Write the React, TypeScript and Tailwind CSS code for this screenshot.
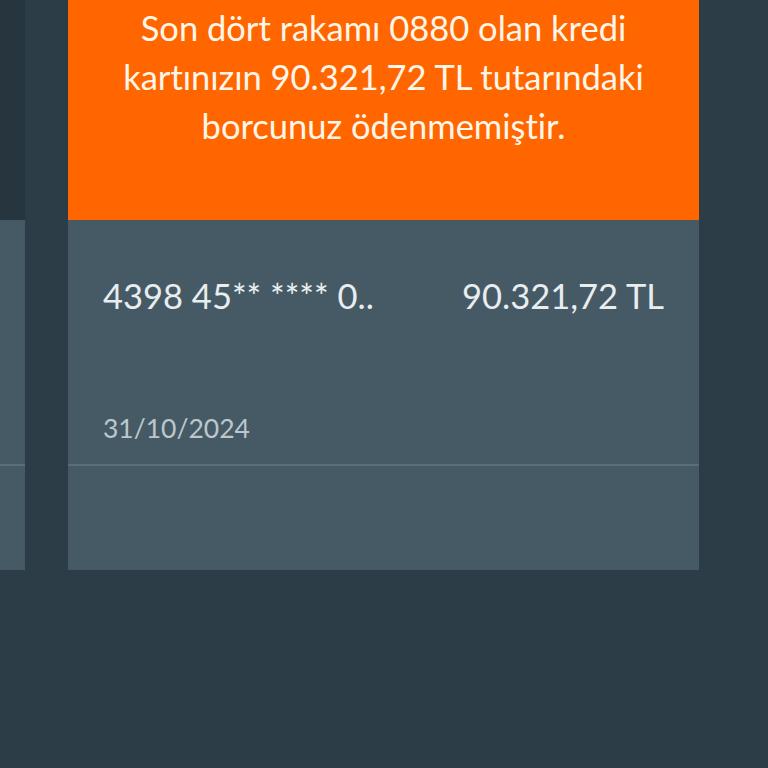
export default function App() {
  return (
    <div
      className="flex h-[768px] w-[768px] items-start gap-[43px] overflow-hidden bg-[#2d3d47] [font-variant-ligatures:none]"
      style={{ fontFamily: "Lato, 'Noto Sans', sans-serif" }}
    >
      {/* previous card, mostly off screen */}
      <div className="flex w-[25px] shrink-0 flex-col">
        <div className="h-[220px] bg-[#26353e]" />
        <div className="h-[246px] border-b-2 border-[#5a6d78] bg-[#465a65]" />
        <div className="h-[104px] bg-[#465a65]" />
      </div>

      <div className="flex w-[631px] shrink-0 flex-col">
        <div className="flex h-[220px] flex-col items-center bg-[#ff6600] px-4 pt-[3px] text-center text-[34.5px] leading-[49px] text-[#fff6ea]">
          <p>
            Son dört rakamı 0880 olan kredi
            <br />
            kartınızın 90.321,72 TL tutarındaki
            <br />
            borcunuz ödenmemiştir.
          </p>
        </div>
        <div className="flex h-[246px] flex-col border-b-2 border-[#5a6d78] bg-[#465a65] px-[35px] pt-[55px]">
          <div className="flex items-center justify-between text-[34.5px] leading-[42px] text-[#e8edf0]">
            <span>4398 45** **** 0..</span>
            <span>90.321,72 TL</span>
          </div>
          <div className="mt-[95px] text-[26.5px] leading-[32px] text-[#bcc7cd]">31/10/2024</div>
        </div>
        <div className="h-[104px] bg-[#465a65]" />
      </div>
    </div>
  );
}
